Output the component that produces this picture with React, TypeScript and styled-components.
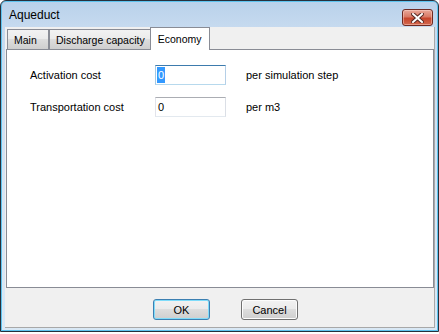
import React from 'react'
import styled, { createGlobalStyle } from 'styled-components'

const GlobalStyle = createGlobalStyle`
html, body {
  margin: 0;
  padding: 0;
  background: #ffffff;
}
body {
  font-family: "Liberation Sans", Arial, sans-serif;
  font-size: 11px;
  color: #000;
}
`

function App() {
  return (
    <>
      <GlobalStyle />
      <Window>
        <TitleBar>
          <Title>Aqueduct</Title>
          <CloseButton aria-label="Close">
            <svg width="13" height="10" viewBox="0 0 13 10">
              <path d="M2 1 L11 9 M11 1 L2 9" stroke="#5a2a24" strokeWidth="4" strokeLinecap="square" />
              <path d="M2 1 L11 9 M11 1 L2 9" stroke="#ffffff" strokeWidth="2" strokeLinecap="square" />
            </svg>
          </CloseButton>
        </TitleBar>

        <Client>
          <TabStrip>
            <Tab>Main</Tab>
            <Tab>Discharge capacity</Tab>
            <Tab $active>Economy</Tab>
          </TabStrip>

          <Panel>
            <FormRow>
              <Label>Activation cost</Label>
              <Field $focused>
                <Value $selected>0</Value>
              </Field>
              <Suffix>per simulation step</Suffix>
            </FormRow>
            <FormRow>
              <Label>Transportation cost</Label>
              <Field>
                <Value>0</Value>
              </Field>
              <Suffix>per m3</Suffix>
            </FormRow>
          </Panel>

          <ButtonRow>
            <Button $default>OK</Button>
            <Button>Cancel</Button>
          </ButtonRow>
        </Client>
      </Window>
    </>
  )
}

export default App

const Window = styled.div`
  width: 439px;
  height: 332px;
  box-sizing: border-box;
  border: 1px solid #27313d;
  border-radius: 6px 6px 0 0;
  padding: 0 3px 3px 4px;
  display: flex;
  flex-direction: column;
  background: linear-gradient(#b9d1ea, #c6daef 26px, #d6e5f4 60%, #d9e8f5);
  box-shadow: inset 0 0 0 1px #5ec4ef;
`

const TitleBar = styled.div`
  height: 26px;
  display: flex;
  justify-content: space-between;
  align-items: flex-start;
  padding: 0 2px 0 4px;
`

const Title = styled.div`
  font-size: 12px;
  line-height: 14px;
  margin-top: 7px;
  color: #000;
`

const CloseButton = styled.div`
  width: 31px;
  height: 17px;
  box-sizing: border-box;
  margin-top: 8px;
  border: 1px solid #6e2a22;
  border-radius: 3px;
  display: flex;
  align-items: center;
  justify-content: center;
  background: linear-gradient(#e9a899, #d97a66 45%, #c7452c 55%, #d2684e);
  box-shadow: inset 0 0 0 1px rgba(255, 220, 210, 0.45);
`

const Client = styled.div`
  flex: 1;
  display: flex;
  flex-direction: column;
  background: #f0f0f0;
  border-right: 1px solid #a8a8a8;
  border-bottom: 1px solid #a8a8a8;
`

const TabStrip = styled.div`
  height: 22px;
  display: flex;
  align-items: flex-end;
  padding-left: 2px;
`

const Tab = styled.div<{ $active?: boolean }>`
  box-sizing: border-box;
  min-width: 42px;
  height: ${p => (p.$active ? '23px' : '20px')};
  margin: ${p => (p.$active ? '0 -1px -1px -1px' : '0')};
  padding: ${p => (p.$active ? '2px 7px 0 7px' : '1px 5px 0 6px')};
  border: 1px solid #898c95;
  border-bottom: none;
  font-size: 10.5px;
  line-height: 18px;
  white-space: nowrap;
  position: relative;
  z-index: ${p => (p.$active ? 1 : 0)};
  background: ${p =>
    p.$active ? '#ffffff' : 'linear-gradient(#f2f2f2, #ebebeb 45%, #dddddd 50%, #cfcfcf)'};
`

const Panel = styled.div`
  height: 239px;
  box-sizing: border-box;
  margin-left: 1px;
  border: 1px solid #898c95;
  background: #ffffff;
  padding: 15px 0 0 23px;
  display: flex;
  flex-direction: column;
  gap: 12px;
`

const FormRow = styled.div`
  display: flex;
  align-items: center;
  height: 20px;
`

const Label = styled.div`
  width: 125px;
`

const Field = styled.div<{ $focused?: boolean }>`
  width: 71px;
  height: 20px;
  box-sizing: border-box;
  border: 1px solid;
  border-color: ${p =>
    p.$focused ? '#3d7bad #b5cfe7 #b7d9ed #a4c9e3' : '#abadb3 #dbdfe6 #e3e9ef #e2e3ea'};
  padding: 1px 0 1px 1px;
  display: flex;
  align-items: stretch;
`

const Value = styled.span<{ $selected?: boolean }>`
  padding: 0 1px;
  line-height: 16px;
  background: ${p => (p.$selected ? '#3399ff' : 'transparent')};
  color: ${p => (p.$selected ? '#ffffff' : '#000000')};
`

const Suffix = styled.div`
  margin-left: 20px;
`

const ButtonRow = styled.div`
  flex: 1;
  display: flex;
  justify-content: center;
  gap: 31px;
  padding: 11px 0 0 12px;
`

const Button = styled.div<{ $default?: boolean }>`
  width: 57px;
  height: 21px;
  box-sizing: border-box;
  border: 1px solid ${p => (p.$default ? '#3c7fb1' : '#707070')};
  border-radius: 3px;
  display: flex;
  align-items: center;
  justify-content: center;
  font-size: 11px;
  background: linear-gradient(#f2f2f2, #ebebeb 45%, #dddddd 50%, #cfcfcf);
  box-shadow: ${p => (p.$default ? 'inset 0 0 0 1px #7fdcfa' : 'inset 0 0 0 1px #fcfcfc')};
`
